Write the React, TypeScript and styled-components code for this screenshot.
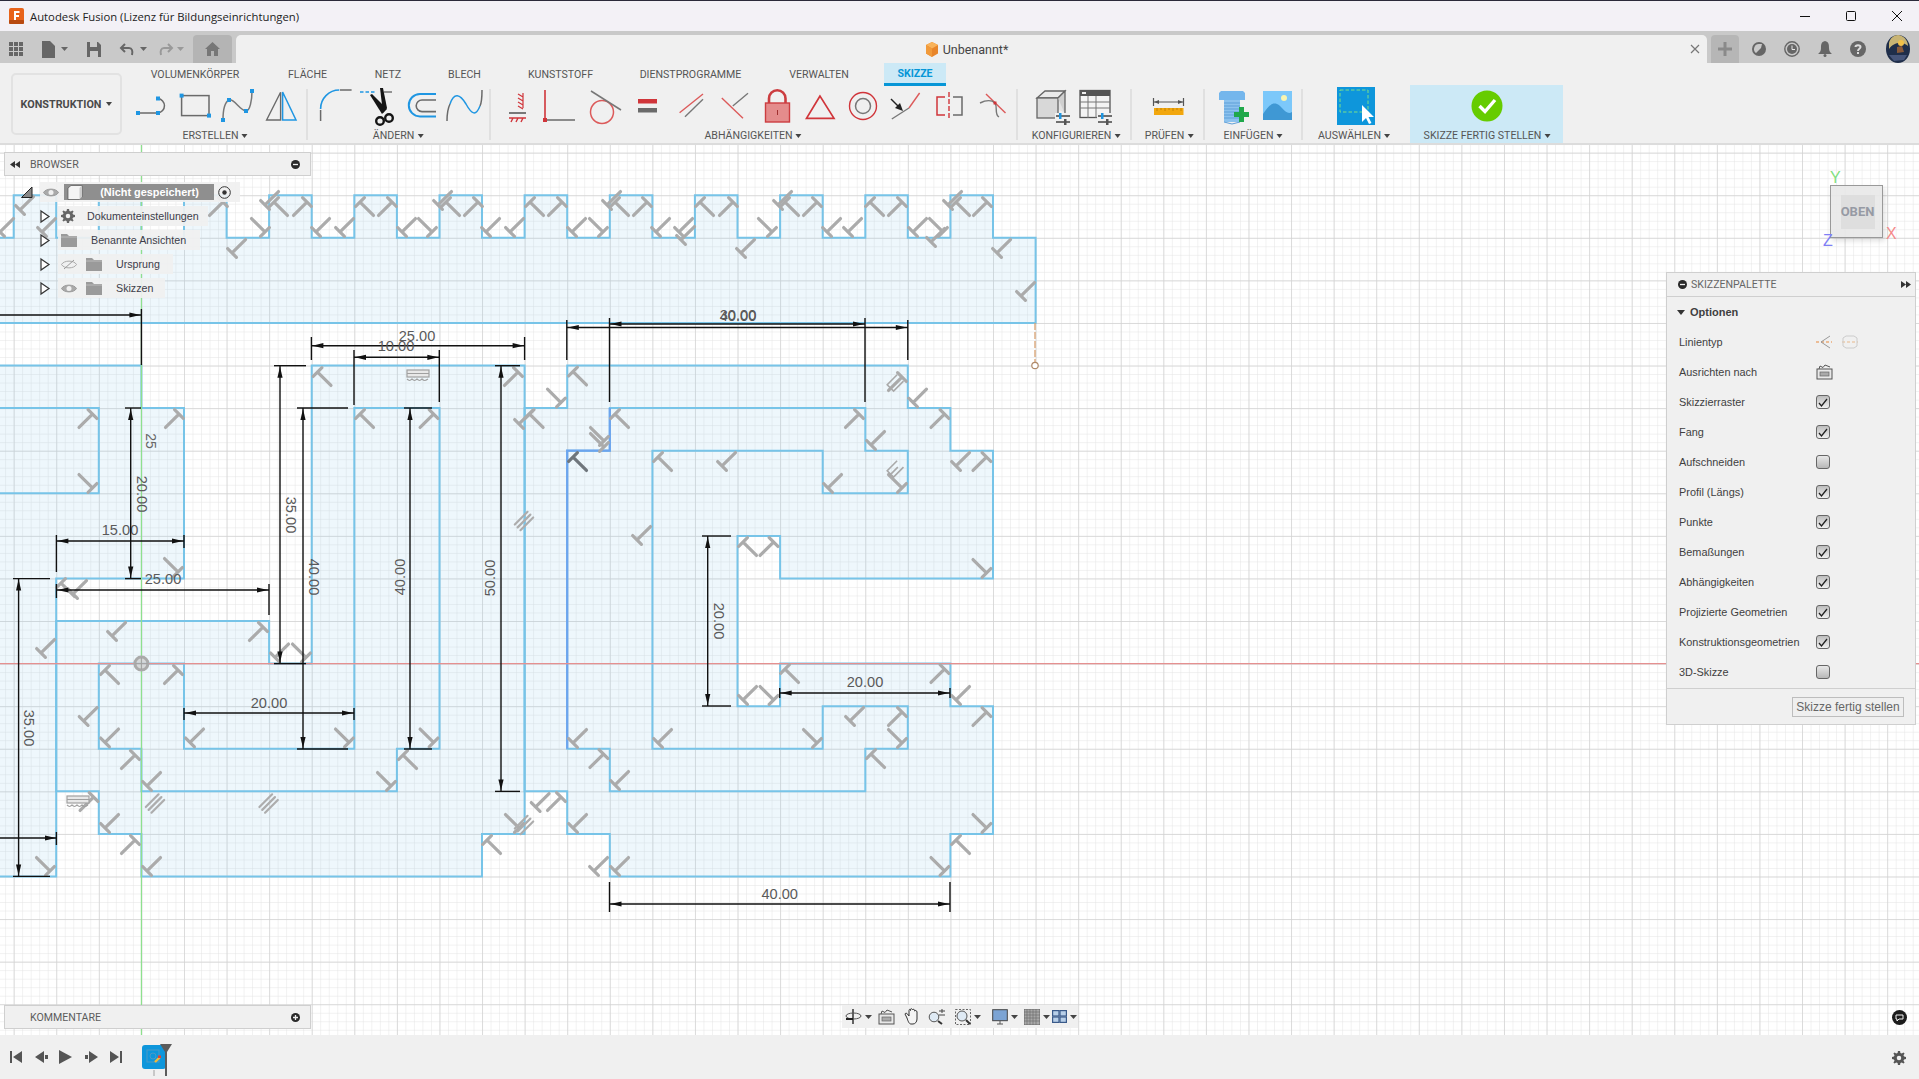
import React from 'react';
import styled, { createGlobalStyle } from 'styled-components';

const Global = createGlobalStyle`
  html, body { margin: 0; padding: 0; width: 1919px; height: 1079px; overflow: hidden; background: #fff; }
  * { box-sizing: border-box; }
  svg { display: block; overflow: visible; }
`;

const SANS = `"Liberation Sans", Arial, sans-serif`;
const RIB = `Roboto, "Liberation Sans", sans-serif`;
const BLUE = '#1f96e2';
const RED = '#d0353a';
const GRAY = '#6a6a6a';

/* ---------- window chrome ---------- */
const Page = styled.div`
  width: 1919px; height: 1079px; display: flex; flex-direction: column;
  font-family: ${SANS}; color: #444; overflow: hidden;
`;
const TitleBar = styled.div`
  height: 31px; flex: none; background: #f3f1f6; border-top: 1px solid #2b2a3a;
  display: flex; align-items: center; padding-left: 9px;
`;
const TitleText = styled.span`
  font-family: "Open Sans", sans-serif; font-size: 11.3px; color: #222; margin-left: 6px; flex: 1; white-space: nowrap;
`;
const WinBtn = styled.div`
  width: 46px; height: 30px; display: flex; align-items: center; justify-content: center; position: relative; left: 1px;
`;
const TabBar = styled.div`
  height: 32px; flex: none; background: #c9c9c9; display: flex; align-items: flex-end;
`;
const QuickBar = styled.div`
  width: 193px; height: 28px; display: flex; align-items: center; padding-left: 9px; flex: none;
`;
const QuickItem = styled.div<{ $w: number }>`
  width: ${p => p.$w}px; display: flex; align-items: center; flex: none;
`;
const QuickGap = styled.span<{ $w: number }>`
  width: ${p => p.$w}px; flex: none;
`;
const HomeTab = styled.div`
  width: 39px; height: 28px; background: #b4b4b4; border-radius: 4px 4px 0 0; display: flex;
  align-items: center; justify-content: center; margin-right: 4px; flex: none;
`;
const DocTab = styled.div`
  width: 1471px; height: 28px; background: #f0f0f0; border-radius: 5px 5px 0 0; flex: none; padding-right: 10px;
  display: flex; align-items: center; justify-content: center; position: relative;
`;
const DocTitle = styled.span`
  font-family: ${RIB}; font-size: 12.5px; color: #444; margin-left: 4px;
`;
const DocClose = styled.div`
  position: absolute; right: 5px; top: 9px; width: 12px; height: 12px;
`;
const PlusTab = styled.div`
  width: 28px; height: 28px; background: #b6b6b6; border-radius: 4px 4px 0 0; margin-left: 4px;
  display: flex; align-items: center; justify-content: center; flex: none;
`;
const TabIcons = styled.div`
  display: flex; align-items: center; height: 28px; padding-left: 3px; flex: none;
`;
const TabIcon = styled.div<{ $w?: number }>`
  width: ${p => p.$w ?? 33}px; display: flex; justify-content: center;
`;

/* ---------- ribbon ---------- */
const Ribbon = styled.div`
  height: 82px; flex: none; background: #f0f0f0; border-bottom: 2px solid #dcdcdc;
  display: flex; padding-left: 11px;
`;
const ModeBox = styled.div`
  width: 111px; height: 62px; margin-top: 10px; border: 2px solid #e2e2e2; border-radius: 5px;
  display: flex; align-items: center; justify-content: center; gap: 5px; flex: none;
  font-family: ${RIB}; font-weight: 700; font-size: 10.8px; color: #4a4a4a;
`;
const Caret = styled.span`
  display: inline-block; width: 0; height: 0; flex: none;
  border-left: 3px solid transparent; border-right: 3px solid transparent; border-top: 4px solid #444;
`;
const ToolArea = styled.div`
  display: flex; flex-direction: column; flex: none; margin-left: 8px;
`;
const RibbonTabs = styled.div`
  height: 23px; display: flex; margin-left: -4px;
`;
const RibbonTab = styled.div<{ $w: number; $active?: boolean; $ml?: number }>`
  width: ${p => p.$w}px; height: 23px; margin-left: ${p => p.$ml ?? 0}px; display: flex; align-items: center; justify-content: center;
  font-family: ${RIB}; font-size: 10.6px; color: ${p => (p.$active ? '#0696d7' : '#555')};
  font-weight: ${p => (p.$active ? 700 : 400)}; white-space: nowrap;
  ${p => p.$active && 'background: #cce9f6; border-bottom: 3px solid #0696d7; padding-top: 1px;'}
`;
const Groups = styled.div`
  display: flex; height: 57px;
`;
const Group = styled.div<{ $w: number; $sep?: boolean; $hl?: boolean; $pl?: number }>`
  width: ${p => p.$w}px; flex: none; display: flex; flex-direction: column; align-items: flex-start;
  padding-left: ${p => p.$pl ?? 0}px; position: relative;
  ${p => p.$hl && 'background: #cce9f6; margin-top: -1px; height: 58px; padding-top: 1px;'}
  ${p => p.$sep && `&::after { content: ''; position: absolute; right: 0; top: 3px; bottom: 3px; width: 2px; background: #e0e0e0; }`}
`;
const Tools = styled.div`
  display: flex; height: 40px; margin-top: 2px;
`;
const Tool = styled.div<{ $w?: number }>`
  width: ${p => p.$w ?? 43.2}px; height: 40px; display: flex; justify-content: center; flex: none;
`;
const GroupLabel = styled.div<{ $cx: number; $top?: number }>`
  position: absolute; top: ${p => p.$top ?? 43}px; left: ${p => p.$cx}px; transform: translateX(-50%);
  display: flex; align-items: center; gap: 3px; white-space: nowrap;
  font-family: ${RIB}; font-size: 10.6px; color: #555;
`;

/* ---------- canvas ---------- */
const Canvas = styled.div`
  flex: 1; position: relative; background: #fff; overflow: hidden;
`;
const Sheet = styled.svg`
  position: absolute; left: 0; top: 0;
`;
const BrowserPanel = styled.div`
  position: absolute; left: 4px; top: 7px; width: 307px;
`;
const PanelHead = styled.div`
  height: 24px; background: #f0f0f0; border: 1px solid #cfcfcf; display: flex; align-items: center;
  padding: 0 10px 0 5px; font-family: ${RIB}; font-size: 10.6px; color: #5c5c5c; gap: 8px;
`;
const HeadTitle = styled.span<{ $ml?: number }>`
  flex: 1; margin-left: ${p => p.$ml ?? 0}px;
`;
const Tree = styled.div`
  display: flex; flex-direction: column; gap: 4px; margin-top: 6px;
`;
const TreeRow = styled.div<{ $pl: number }>`
  display: flex; height: 20px; align-items: center; padding-left: ${p => p.$pl}px;
`;
const Expander = styled.div<{ $w: number }>`
  width: ${p => p.$w}px; flex: none;
`;
const RowBox = styled.div<{ $w: number }>`
  width: ${p => p.$w}px; height: 20px; background: rgba(240,240,240,.92); display: flex; align-items: center; padding-left: 3px;
  font-size: 10.7px; color: #3d3d4a; white-space: nowrap;
`;
const RowLabel = styled.span<{ $ml: number }>`
  margin-left: ${p => p.$ml}px;
`;
const RootBar = styled.div`
  width: 150px; height: 16px; margin-left: 5px; background: #8f8f8f; display: flex; align-items: center;
  color: #fff; font-weight: 700; font-size: 10.9px; padding-left: 3px; margin-right: 4px;
`;
const RootText = styled.span`
  flex: 1; text-align: center; padding-left: 2px;
`;
const CommentBar = styled(PanelHead)`
  position: absolute; left: 4px; top: 860px; width: 307px; height: 24px;
`;
const NavBar = styled.div`
  position: absolute; left: 842px; top: 860px; width: 236px; height: 23px; background: #f0f0f0;
  display: flex; align-items: center;
`;
const NavItem = styled.div<{ $w: number }>`
  width: ${p => p.$w}px; flex: none; display: flex; align-items: center; justify-content: center; gap: 3px;
`;
const Corner = styled.div`
  position: absolute; left: 1892px; top: 865px; width: 15px; height: 15px; border-radius: 50%; background: #1c1c1c;
  display: flex; align-items: center; justify-content: center;
`;
const Cube = styled.div`
  position: absolute; left: 1830px; top: 40px; width: 53px; height: 53px; background: rgba(232,232,232,.9);
  border: 1.5px solid #999; box-shadow: 2px 3px 5px rgba(0,0,0,.12); display: flex; align-items: center; justify-content: center;
`;
const CubeText = styled.span`
  font-family: ${RIB}; font-weight: 700; font-size: 13px; color: #969aa4; background: #dedede;
  padding: 10px 0; width: 34px; text-align: center; line-height: 14px; transform: translateX(1px);
`;
const Axis = styled.span<{ $c: string; $x: number; $y: number }>`
  position: absolute; left: ${p => p.$x}px; top: ${p => p.$y}px; color: ${p => p.$c};
  font-size: 16px; line-height: 14px; font-weight: 400;
`;
const Palette = styled.div`
  position: absolute; left: 1666px; top: 127px; width: 250px; background: #f0f0f0; border: 1px solid #cfcfcf;
  display: flex; flex-direction: column; font-size: 10.9px; color: #3f3f3f;
`;
const PalHead = styled.div`
  height: 24px; display: flex; align-items: center; padding: 0 4px 0 11px; gap: 4px; border-bottom: 1px solid #cfcfcf;
  font-family: ${RIB}; font-size: 10.6px; color: #666;
`;
const PalSection = styled.div`
  height: 30px; display: flex; align-items: center; padding-left: 10px; gap: 5px; font-weight: 700; font-size: 11px; color: #3f3f3f;
`;
const SecCaret = styled.span`
  width: 0; height: 0; border-left: 4px solid transparent; border-right: 4px solid transparent; border-top: 5px solid #333;
`;
const PalRow = styled.div`
  height: 30px; display: grid; grid-template-columns: 137px 1fr; align-items: center; padding-left: 12px;
`;
const PalCtrl = styled.div`
  display: flex; align-items: center; gap: 10px;
`;
const Check = styled.div<{ $on: boolean }>`
  width: 14px; height: 14px; border: 1px solid #666; border-radius: 3px; background: ${p => (p.$on ? 'linear-gradient(#bdbdbd,#f0f0f0)' : 'linear-gradient(#e8e8e8,#b8b8b8)')};
  display: flex; align-items: center; justify-content: center; flex: none;
`;
const PalFoot = styled.div`
  height: 36px; margin-top: 1px; border-top: 1px solid #cfcfcf; display: flex; justify-content: flex-end; align-items: center; padding-right: 11px;
`;
const PalBtn = styled.div`
  width: 112px; height: 20px; border: 1px solid #bdbdbd; color: #666; font-size: 12px; display: flex; align-items: center; justify-content: center; background: #efefef; white-space: nowrap;
`;

/* ---------- timeline ---------- */
const Timeline = styled.div`
  height: 44px; flex: none; background: #f0f0f0; display: flex; align-items: center; padding-left: 10px; position: relative;
`;
const PlayBtn = styled.div<{ $w: number }>`
  width: ${p => p.$w}px; flex: none;
`;
const TimeItem = styled.div`
  width: 24px; height: 24px; margin-left: 26px; background: #0e96db; border-radius: 3px; flex: none; display: flex; align-items: center; justify-content: center;
`;
const Marker = styled.svg`
  position: absolute; left: 160px; top: 9px;
`;
const TimeStub = styled.div`
  position: absolute; left: 153px; top: 35px; width: 2px; height: 6px; background: #c8c8c8;
`;
const SettingGear = styled.div`
  position: absolute; right: 13px; top: 16px;
`;

/* ---------- sketch data ---------- */
const U = 42.58, OX = 141.4, OY = 663.6;
const X = (k: number) => OX + U * k;
const Y = (k: number) => OY - U * k;
const poly = (pts: number[][]) => pts.map(([a, b]) => `${X(a).toFixed(1)},${Y(b).toFixed(1)}`).join(' ');

const topShape = (() => {
  const pts: number[][] = [[-5, 8], [-5, 10]];
  for (let k = -3; k <= 19; k += 2) pts.push([k, 10], [k, 11], [k + 1, 11], [k + 1, 10]);
  pts.push([21, 10], [21, 8]);
  return pts;
})();
const leftShape = [[-5, 7], [0, 7], [0, 6], [1, 6], [1, 2], [-2, 2], [-2, -5], [-5, -5]];
const leftNotch = [[-5, 6], [-1, 6], [-1, 4], [-5, 4]];
const midOuter = [[-2, 1], [3, 1], [3, 0], [4, 0], [4, 7], [9, 7], [9, -4], [8, -4], [8, -5], [0, -5], [0, -4], [-1, -4], [-1, -3], [-2, -3]];
const midInner = [[-1, 0], [1, 0], [1, -2], [5, -2], [5, 6], [7, 6], [7, -2], [6, -2], [6, -3], [0, -3], [0, -2], [-1, -2]];
const rightOuter = [[9, 6], [10, 6], [10, 7], [18, 7], [18, 6], [19, 6], [19, 5], [20, 5], [20, 2], [15, 2], [15, 3], [14, 3], [14, -1], [15, -1], [15, 0], [19, 0], [19, -1], [20, -1], [20, -4], [19, -4], [19, -5], [11, -5], [11, -4], [10, -4], [10, -3], [9, -3]];
const rightInner = [[10, 5], [11, 5], [11, 6], [17, 6], [17, 5], [18, 5], [18, 4], [16, 4], [16, 5], [12, 5], [12, -2], [16, -2], [16, -1], [18, -1], [18, -2], [17, -2], [17, -3], [11, -3], [11, -2], [10, -2]];

const TL = -45, TR = 45, BR = 135, BL = -135;
const glyphs: number[][] = [
  [25, 205, BL], [5, 227, BL], [47, 227, BL], [218, 207, TR], [260, 227, BR], [237, 248, BL], [270, 200, BL],
  [279, 207, TL], [302, 207, TR], [321, 227, BL], [345, 227, BL], [365, 207, TL], [387, 207, TR], [407, 227, BL], [427, 227, BR],
  [443, 200, BL], [451, 207, TL], [473, 207, TR], [491, 227, BL], [515, 227, BL], [535, 207, TL], [557, 207, TR], [577, 227, BL], [598, 227, BR],
  [612, 200, BL], [620, 207, TL], [642, 207, TR], [661, 227, BL], [684, 227, BL], [686, 235, BL], [705, 207, TL], [728, 207, TR], [767, 227, BR], [746, 248, BL],
  [783, 200, BL], [790, 207, TL], [812, 207, TR], [832, 227, BL], [853, 227, BL], [875, 207, TL], [897, 207, TR], [918, 227, BL], [938, 227, BR], [936, 237, BL],
  [953, 200, BL], [961, 207, TL], [982, 207, TR], [1002, 248, BL], [1026, 291, BL],
  [87.5, 419, TR], [87.5, 483, BR], [174, 419, TR], [173, 567, BR], [66, 588, TL], [78, 589, BL], [117, 631, BL], [258, 632, TR], [46, 648, BL],
  [110, 675, TL], [173, 675, TR], [88.6, 716, BL], [110, 737.5, BL], [195, 737.5, BL], [344, 737.5, BR], [130, 760, TR], [152, 781, BL], [386, 781, BR],
  [408, 760, TL], [428.6, 737.5, BR], [365, 419, TL], [428.6, 419, TR], [322.5, 377, TL], [513, 377, TR], [534.6, 419, TL], [524, 419, BL],
  [280, 652.5, BL], [301, 652.5, BR], [110, 823, BL], [130, 845, TR], [152, 866, BL], [492, 845, TL], [514, 823, BR], [45, 866, BR], [88.6, 802, TR],
  [556, 397.6, BR], [578, 376.5, TL], [897, 382, TR], [918, 397.6, BL], [599, 436, BR], [599, 442, BR], [620, 419, TL], [854, 419, TR], [876, 440, BL], [939.5, 419, TR],
  [663, 462, TL], [727, 461, BL], [833, 483, BL], [897, 483, BR], [961, 461, BL], [981.5, 462, TR], [981.5, 568, BR], [642, 535, BL], [748, 547, TL], [768.6, 547, TR],
  [748, 695, BL], [768.6, 695, BR], [790, 674, TL], [939.5, 674, TR], [961, 695, BL], [981.5, 717, TR], [855, 716, BL], [897, 717, TR], [897, 738, BR], [812, 738, BR], [663, 738, BL], [578, 738, BL],
  [598.5, 759, TR], [620, 780, BL], [876, 759, TL], [981.5, 823, BR], [961, 845, TL], [939.5, 866, BR], [620, 866, BL], [599, 866, BL], [578, 823, BL], [540.6, 802, BL], [556, 802, TR],
];
const parallels = [[524, 521], [155, 803.5], [268.6, 803.5], [524, 825]];
const brackets = [[895, 384], [895, 470]];

const hdims = [
  { a: 311.4, b: 524.6, y: 345.7, t: '25.00', tx: 417, ty: 341, e1: [337, 360], e2: [337, 360] },
  { a: 354, b: 439.3, y: 357.3, t: '10.00', tx: 396, ty: 351, e1: [350, 405], e2: [350, 402] },
  { a: 56.4, b: 184, y: 541, t: '15.00', tx: 120, ty: 535, e1: [535, 572], e2: [535, 548] },
  { a: 56.4, b: 269, y: 590, t: '25.00', tx: 163, ty: 584, e1: [584, 598], e2: [584, 615] },
  { a: 184, b: 354, y: 713, t: '20.00', tx: 269, ty: 708, e1: [708, 720], e2: [708, 720] },
  { a: 566.8, b: 907.8, y: 327.5, t: '30.00', tx: 738, ty: 320, e1: [320, 360], e2: [320, 360] },
  { a: 609.5, b: 865, y: 324, t: '40.00', tx: 738, ty: 321, e1: [318, 402], e2: [318, 402] },
  { a: 779.7, b: 950, y: 693, t: '20.00', tx: 865, ty: 687, e1: [688, 698], e2: [688, 698] },
  { a: 609.5, b: 950, y: 904, t: '40.00', tx: 779.7, ty: 899, e1: [882, 912], e2: [882, 912] },
];
const vdims = [
  { a: 365.7, b: 663.6, x: 280, t: '35.00', tx: 286, ty: 515, rot: 90, e: [274, 306] },
  { a: 408, b: 749, x: 303, t: '40.00', tx: 309, ty: 577, rot: 90, e: [297, 348] },
  { a: 408, b: 749, x: 410, t: '40.00', tx: 405, ty: 577, rot: -90, e: [404, 432] },
  { a: 365.7, b: 791.4, x: 501, t: '50.00', tx: 495, ty: 578, rot: -90, e: [495, 520] },
  { a: 408, b: 578.6, x: 130.7, t: '20.00', tx: 137, ty: 494, rot: 90, e: [125, 141] },
  { a: 578.6, b: 876.4, x: 18.6, t: '35.00', tx: 24, ty: 728, rot: 90, e: [13, 50] },
  { a: 536, b: 706, x: 707.7, t: '20.00', tx: 714, ty: 621, rot: 90, e: [702, 731] },
];

const Arrow = ({ x, y, dir }: { x: number; y: number; dir: 'l' | 'r' | 'u' | 'd' }) => {
  const l = 11, w = 2.6;
  const p = dir === 'l' ? `${x},${y} ${x + l},${y - w} ${x + l},${y + w}`
    : dir === 'r' ? `${x},${y} ${x - l},${y - w} ${x - l},${y + w}`
      : dir === 'u' ? `${x},${y} ${x - w},${y + l} ${x + w},${y + l}`
        : `${x},${y} ${x - w},${y - l} ${x + w},${y - l}`;
  return <polygon points={p} fill="#111" />;
};

const DIM_TEXT = { fontFamily: 'Liberation Sans, Arial, sans-serif', fontSize: 14.6, fill: '#5a5a5a' };
const T_PATH = 'M0 -7V12M-6.2 -7H6.2';

const Sketch = () => (
  <Sheet width={1919} height={890} viewBox="0 145 1919 890">
    <defs>
      <pattern id="minor" patternUnits="userSpaceOnUse" x={OX} y={OY} width={U / 5} height={U / 5}>
        <path d={`M0 0V${U / 5}M0 0H${U / 5}`} stroke="#e4e4e4" strokeWidth="1" fill="none" />
      </pattern>
      <pattern id="major" patternUnits="userSpaceOnUse" x={OX} y={OY} width={U} height={U}>
        <path d={`M0 0V${U}M0 0H${U}`} stroke="#d2d2d2" strokeWidth="1.4" fill="none" />
      </pattern>
    </defs>
    <rect x="0" y="145" width="1919" height="890" fill="url(#minor)" />
    <rect x="0" y="145" width="1919" height="890" fill="url(#major)" />

    {[topShape, leftShape, midOuter, rightOuter].map((s, i) => (
      <polygon key={i} points={poly(s)} fill="#8ccbee" fillOpacity=".15" stroke="#77c4e8" strokeWidth="2" />
    ))}
    <polyline points={poly(leftNotch)} fill="none" stroke="#77c4e8" strokeWidth="2" />
    <polygon points={poly(midInner)} fill="none" stroke="#77c4e8" strokeWidth="2" />
    <polygon points={poly(rightInner)} fill="none" stroke="#77c4e8" strokeWidth="2" />
    <polyline points={poly([[10, -2], [10, 5], [11, 5], [11, 6]])} fill="none" stroke="#6ca4ee" strokeWidth="2.2" />

    <line x1="0" x2="1919" y1={OY} y2={OY} stroke="#e59090" strokeWidth="1.2" />
    <line x1={OX} x2={OX} y1="145" y2="1035" stroke="#8ee08e" strokeWidth="1.2" />
    <circle cx={OX} cy={OY} r="6.5" fill="#d0d0d0" fillOpacity=".8" stroke="#aaaaaa" strokeWidth="3" />
    <path d={`M${OX} ${OY - 6}V${OY + 6}M${OX - 6} ${OY}H${OX + 6}`} stroke="#a0a0a0" />

    <line x1="1035" x2="1035" y1="323" y2="362" stroke="#d8a070" strokeDasharray="7 2" strokeWidth="1.3" />
    <circle cx="1035" cy="365.5" r="3.2" fill="#fff" stroke="#b08a6a" strokeWidth="1.2" />

    {glyphs.map(([x, y, r], i) => (
      <g key={i} transform={`translate(${x} ${y}) rotate(${r})`} stroke="#ababab" strokeWidth="3.2" strokeLinecap="round">
        <path d={T_PATH} fill="none" />
      </g>
    ))}
    <g transform="translate(578 462) rotate(-45)" stroke="#6f767c" strokeWidth="3.2" strokeLinecap="round">
      <path d={T_PATH} fill="none" />
    </g>
    {parallels.map(([x, y], i) => (
      <g key={i} transform={`translate(${x} ${y}) rotate(-45)`} stroke="#adadad" strokeWidth="2.2" strokeLinecap="round">
        <path d="M-9 -4H9M-9 0H9M-9 4H9" fill="none" />
      </g>
    ))}
    {brackets.map(([x, y], i) => (
      <g key={i} transform={`translate(${x} ${y}) rotate(-45)`} stroke="#a9a9a9" strokeWidth="1.6" fill="none">
        <path d="M8 -5H-6V4H8M4 0H-9" />
      </g>
    ))}
    {[[418, 375], [78, 801]].map(([x, y], i) => (
      <g key={i} transform={`translate(${x} ${y})`} fill="none" stroke="#a0a0a0" strokeWidth="1.2">
        <rect x="-11" y="-5" width="22" height="7" fill="#e8e8e8" />
        <path d="M-11 -1.5H11M-11 4C-9 6 -8 6 -6 4C-4 6 -3 6 -1 4C1 6 2 6 4 4C6 6 7 6 10 4" />
      </g>
    ))}

    <g stroke="#111" strokeWidth="1.4">
      <line x1="0" x2={OX} y1="315" y2="315" />
      <line x1={OX} x2={OX} y1="309" y2="365" />
      <line x1="0" x2="56" y1="838" y2="838" />
      <line x1="56.4" x2="56.4" y1="832" y2="845" />
    </g>
    <Arrow x={OX - 1} y={315} dir="r" />
    <Arrow x={56} y={838} dir="r" />

    {hdims.map((d, i) => (
      <g key={i}>
        <g stroke="#111" strokeWidth="1.4">
          <line x1={d.a} x2={d.b} y1={d.y} y2={d.y} />
          <line x1={d.a} x2={d.a} y1={d.e1[0]} y2={d.e1[1]} />
          <line x1={d.b} x2={d.b} y1={d.e2[0]} y2={d.e2[1]} />
        </g>
        <Arrow x={d.a + 1} y={d.y} dir="l" />
        <Arrow x={d.b - 1} y={d.y} dir="r" />
        <text x={d.tx} y={d.ty} textAnchor="middle" {...DIM_TEXT}>{d.t}</text>
      </g>
    ))}
    {vdims.map((d, i) => (
      <g key={i}>
        <g stroke="#111" strokeWidth="1.4">
          <line x1={d.x} x2={d.x} y1={d.a} y2={d.b} />
          <line x1={d.e[0]} x2={d.e[1]} y1={d.a} y2={d.a} />
          <line x1={d.e[0]} x2={d.e[1]} y1={d.b} y2={d.b} />
        </g>
        <Arrow x={d.x} y={d.a + 1} dir="u" />
        <Arrow x={d.x} y={d.b - 1} dir="d" />
        <text transform={`translate(${d.tx} ${d.ty}) rotate(${d.rot})`} textAnchor="middle" {...DIM_TEXT}>{d.t}</text>
      </g>
    ))}
    <text transform="translate(146 441) rotate(90)" textAnchor="middle" fontFamily="Liberation Sans, Arial, sans-serif" fontSize="14" fill="#666">25</text>
  </Sheet>
);

/* ---------- small icons ---------- */
const Sq = ({ x, y, s = 4 }: { x: number; y: number; s?: number }) => <rect x={x - s / 2} y={y - s / 2} width={s} height={s} fill={BLUE} />;
const I = ({ children, w = 44, h = 40 }: { children: React.ReactNode; w?: number; h?: number }) => (
  <svg width={w} height={h} viewBox={`0 0 ${w} ${h}`} fill="none">{children}</svg>
);
const Sliders = ({ x, y }: { x: number; y: number }) => (
  <g>
    <rect x={x - 1} y={y - 3} width="16" height="11" fill="#f0f0f0" />
    <path d={`M${x} ${y}H${x + 14}M${x} ${y + 6}H${x + 14}`} stroke="#444" strokeWidth="1.7" />
    <rect x={x + 3} y={y - 3} width="2.5" height="6" fill={BLUE} />
    <rect x={x + 8} y={y + 3} width="2.5" height="6" fill="#555" />
  </g>
);

const Icons = {
  line: <I><path d="M8 25H28M28 10.5A7.3 7.3 0 0 1 28 25" stroke={GRAY} strokeWidth="1.5" /><Sq x={8} y={25} /><Sq x={28} y={25} /><Sq x={28} y={10.5} /></I>,
  rect: <I><rect x="8.6" y="7.6" width="27.4" height="20" stroke={GRAY} strokeWidth="1.5" /><Sq x={8.6} y={7.6} /><Sq x={36} y={27.6} /></I>,
  spline: <I><path d="M7 32C7 22 9 14 13 12C18 10 24 23 30 23C34 23 36 12 36 3" stroke="#777" strokeWidth="1.5" /><Sq x={7} y={32} /><Sq x={13} y={12} /><Sq x={30} y={23} /><Sq x={36} y={3} /></I>,
  mirror: <I><path d="M7.6 32L21.6 4.3V32Z" stroke={GRAY} strokeWidth="1.4" /><path d="M23.6 4L37 32H23.6Z" stroke={BLUE} strokeWidth="1.5" /></I>,
  fillet: <I><path d="M7.6 33V22M27 2H38.6" stroke={GRAY} strokeWidth="1.5" /><path d="M7.6 21A18.7 18.7 0 0 1 26.3 2" stroke={BLUE} strokeWidth="1.6" /></I>,
  scissors: <I><path d="M4 4H19" stroke={BLUE} strokeWidth="1.4" strokeDasharray="3.5 2" /><path d="M28 4H36" stroke={GRAY} strokeWidth="1.4" /><path d="M24 0L27 0L31 20L27 25Z" fill="#151515" /><path d="M14 7L16 6L31 21L26 26Z" fill="#151515" /><circle cx="24" cy="33" r="3.8" stroke="#151515" strokeWidth="2.4" /><circle cx="33" cy="30" r="3.8" stroke="#151515" strokeWidth="2.4" /></I>,
  offset: <I><path d="M37 6H21A11.2 11.2 0 0 0 21 28.4H37" stroke={BLUE} strokeWidth="2" /><path d="M37 12H23A5.8 5.8 0 0 0 23 23.6H37" stroke={GRAY} strokeWidth="1.6" /></I>,
  sline: <I><path d="M5 33C5 25 6 20 8 16M38 18C40 14 40 8 40 2" stroke={GRAY} strokeWidth="1.5" /><path d="M8 16C12 4 18 6 24 16C30 27 34 28 38 18" stroke={BLUE} strokeWidth="1.5" /></I>,
  coincide: <I><path d="M27 5V20M22 6L27 9M22 10L27 13M22 14L27 17M22 18L27 21" stroke={RED} strokeWidth="1.2" /><path d="M13 25H30" stroke={GRAY} strokeWidth="1.8" /><path d="M13 30H30M15 34L17 30M20 34L22 30M25 34L27 30" stroke={RED} strokeWidth="1.4" /></I>,
  perp: <I><path d="M6 2V32" stroke={RED} strokeWidth="1.6" /><path d="M6 32H36" stroke={GRAY} strokeWidth="1.5" /><rect x="4" y="30" width="4" height="4" fill={RED} /></I>,
  tangent: <I><circle cx="20" cy="24" r="11.5" stroke="#dc5a5a" strokeWidth="1.5" /><path d="M9 3L39 22" stroke="#777" strokeWidth="1.5" /></I>,
  equal: <I><rect x="13" y="11" width="19" height="4.5" fill={RED} /><rect x="13" y="20" width="19" height="4.5" fill={GRAY} /></I>,
  parallel: <I><path d="M10.6 24.7L34 6" stroke="#dc5a5a" strokeWidth="1.4" /><path d="M16 28.7L34 11.3" stroke="#777" strokeWidth="1.4" /></I>,
  perp2: <I><path d="M9.8 10L31 30.3" stroke="#dc5a5a" strokeWidth="1.4" /><path d="M20.8 18L36 5.3" stroke="#777" strokeWidth="1.4" /></I>,
  lock: <I><path d="M14 15V10.5A8 8 0 0 1 30.5 10.5V15" stroke="#cc3d40" strokeWidth="2.6" /><rect x="10.5" y="15" width="24" height="19" fill="#e48c8c" stroke="#cc3d40" strokeWidth="1.4" /><path d="M22.5 22V27" stroke="#a03030" /></I>,
  triangle: <I><path d="M22 8L8.5 30.3H36Z" stroke={RED} strokeWidth="1.7" /></I>,
  concentric: <I><circle cx="22" cy="18" r="13.5" stroke={RED} strokeWidth="1.4" /><circle cx="22" cy="18" r="7.5" stroke="#777" strokeWidth="1.5" /></I>,
  midpoint: <I><path d="M35.6 5L25 20" stroke="#dc5a5a" strokeWidth="1.4" /><path d="M25 20L7.8 31" stroke="#777" strokeWidth="1.4" /><path d="M7 11L15 19" stroke="#222" strokeWidth="1.5" /><path d="M19 23L11 20L16 15Z" fill="#222" /></I>,
  symmetry: <I><path d="M18 9H10V27H18" stroke={RED} strokeWidth="1.5" /><path d="M26 9H35V27H26" stroke={GRAY} strokeWidth="1.5" /><path d="M22 4V32" stroke={RED} strokeWidth="1.4" strokeDasharray="5 2" /></I>,
  curvature: <I><path d="M16 6L35.5 25" stroke="#dc5a5a" strokeWidth="1.4" /><path d="M10 15C16 12 22 12 25 15C28 19 24 26 29 29" stroke="#777" strokeWidth="1.4" /><rect x="23.5" y="13.5" width="3" height="3" fill={RED} /></I>,
  paramCube: <I><path d="M7 10L15 3H35V25" fill="#e2e2e2" /><path d="M7 10L15 3H35L28 10Z" fill="#eaeaea" stroke="#666" strokeWidth="1.3" /><rect x="7" y="10" width="21" height="20" fill="#d8d8d8" stroke="#666" strokeWidth="1.3" /><path d="M28 10L35 3V26" fill="#cfcfcf" stroke="#666" strokeWidth="1.3" /><Sliders x={26} y={28} /></I>,
  paramTable: <I><rect x="6" y="2.5" width="30" height="27" fill="#f4f4f4" stroke="#555" strokeWidth="1.3" /><rect x="6" y="2" width="30" height="6" fill="#555" /><rect x="8" y="4" width="4" height="2" fill="#eee" /><path d="M6 14H36M6 20H36M14 8V30M22 8V30" stroke="#777" /><Sliders x={24} y={28} /></I>,
  measure: <I><path d="M8 14H37" stroke="#555" strokeWidth="1" /><path d="M7.5 10V18M37.5 10V18" stroke="#555" strokeWidth="1.2" /><path d="M8 14L13 12V16ZM37 14L32 12V16Z" fill="#555" /><rect x="8" y="20" width="29.5" height="7" fill="#f2a70e" /><path d="M11 20V23M15 20V22M19 20V23M23 20V22M27 20V23M31 20V22M35 20V23" stroke="#b97a00" strokeWidth=".8" /></I>,
  bolt: <I><path d="M7 3H29L31 5V12H5V5Z" fill="#74b6ec" /><rect x="10" y="12" width="16" height="22" fill="#8cc2ee" /><path d="M10 15H26M10 18H26M10 21H26M10 24H26M10 27H26M10 30H26" stroke="#5f9fd8" strokeWidth="1" /><path d="M10 34L18 36L26 34" stroke="#5f9fd8" /><rect x="20" y="24" width="15" height="5" fill="#20a84a" /><rect x="25" y="19" width="5" height="15" fill="#20a84a" /></I>,
  image: <I><rect x="6" y="3" width="29" height="29" fill="#7cc8fa" /><circle cx="27" cy="10" r="3" fill="#f8f4b0" /><path d="M6 32V26C10 20 14 14 20 16C25 18 29 28 35 24V32Z" fill="#3f98d4" /></I>,
  select: <I h={40}><rect x="3" y="-1" width="38" height="38" fill="#0e96db" /><rect x="6" y="2" width="28" height="22" stroke="#7adf8a" strokeDasharray="3.5 2" strokeWidth="1" /><path d="M28 17V34L32 30L35 36L37.5 35L34.5 29L40 29Z" fill="#fff" /></I>,
  finish: <I w={46} h={40}><circle cx="23" cy="18" r="15.5" fill="#66cc00" /><path d="M15.5 18L21 23.5L31 12" stroke="#fff" strokeWidth="3.4" /></I>,
};

const Tri = ({ c = '#222' }: { c?: string }) => <svg width="7" height="4"><path d="M0 0H7L3.5 4Z" fill={c} /></svg>;
const CubeIcon = () => (
  <svg width="14" height="17" viewBox="0 0 14 17"><path d="M7 1L13 4V12.5L7 16L1 12.5V4Z" fill="#e8852a" /><path d="M7 1L13 4L7 7.5L1 4Z" fill="#f9b35a" /><path d="M7 7.5V16L1 12.5V4Z" fill="#f19a3a" /></svg>
);
const Folder = () => (
  <svg width="16" height="13" viewBox="0 0 16 13"><path d="M0 0H6L8 2H16V13H0Z" fill="#9a9a9a" /><path d="M0 3H16" stroke="#bbb" /></svg>
);
const Eye = ({ off }: { off?: boolean }) => (
  <svg width="16" height="11" viewBox="0 0 16 11" fill="none">
    <path d="M0.5 5.5C3 1 13 1 15.5 5.5C13 10 3 10 0.5 5.5Z" fill={off ? 'none' : '#aaa'} stroke={off ? '#aaa' : '#999'} />
    {off ? <path d="M3 10L13 1" stroke="#999" /> : <circle cx="8" cy="5.5" r="2.5" fill="#f0f0f0" />}
  </svg>
);
const Gear = ({ s = 14, c = '#666' }: { s?: number; c?: string }) => (
  <svg width={s} height={s} viewBox="0 0 16 16">
    <path d="M6.8 0H9.2L9.6 2.2L11.2 2.9L13.1 1.6L14.4 2.9L13.1 4.8L13.8 6.4L16 6.8V9.2L13.8 9.6L13.1 11.2L14.4 13.1L13.1 14.4L11.2 13.1L9.6 13.8L9.2 16H6.8L6.4 13.8L4.8 13.1L2.9 14.4L1.6 13.1L2.9 11.2L2.2 9.6L0 9.2V6.8L2.2 6.4L2.9 4.8L1.6 2.9L2.9 1.6L4.8 2.9L6.4 2.2Z" fill={c} />
    <circle cx="8" cy="8" r="2.6" fill="#f0f0f0" />
  </svg>
);
const Exp = () => <svg width="10" height="13" viewBox="0 0 10 13" fill="none"><path d="M1 1L9 6.5L1 12Z" stroke="#333" strokeWidth="1.2" fill="#fff" /></svg>;
const DotBtn = ({ plus }: { plus?: boolean }) => (
  <svg width="9" height="9" viewBox="0 0 9 9"><circle cx="4.5" cy="4.5" r="4.5" fill="#2a2a2a" /><path d={plus ? 'M2 4.5H7M4.5 2V7' : 'M2 4.5H7'} stroke="#f0f0f0" strokeWidth="1.3" /></svg>
);
const DoubleTri = ({ left }: { left?: boolean }) => (
  <svg width="10" height="7" viewBox="0 0 10 7"><path d={left ? 'M5 0V7L0 3.5ZM10 0V7L5 3.5Z' : 'M0 0V7L5 3.5ZM5 0V7L10 3.5Z'} fill="#333" /></svg>
);

const palRows: [string, boolean][] = [
  ['Skizzierraster', true], ['Fang', true], ['Aufschneiden', false], ['Profil (Längs)', true], ['Punkte', true], ['Bemaßungen', true],
  ['Abhängigkeiten', true], ['Projizierte Geometrien', true], ['Konstruktionsgeometrien', true], ['3D-Skizze', false],
];

const ViewCapture = () => (
  <svg width="17" height="16" viewBox="0 0 17 16" fill="none"><rect x="1" y="5" width="15" height="10" stroke="#555" fill="#e8e8e8" /><rect x="4" y="8" width="9" height="4" fill="#aaa" stroke="#666" strokeWidth=".7" /><path d="M3 5L4 2L7 3.5L9 1L14 3" stroke="#555" /></svg>
);

const ribbonTabs: [string, number][] = [['VOLUMENKÖRPER', 138], ['FLÄCHE', 87], ['NETZ', 74], ['BLECH', 79], ['KUNSTSTOFF', 113], ['DIENSTPROGRAMME', 147], ['VERWALTEN', 110]];

export default function App() {
  return (
    <Page>
      <Global />
      <TitleBar>
        <svg width="15" height="16" viewBox="0 0 15 16"><rect width="15" height="16" rx="2" fill="#e8631a" /><rect y="12" width="15" height="4" rx="1" fill="#b84a10" /><path d="M5 3H10.5V5H7V7H10V9H7V12H5Z" fill="#fff" /></svg>
        <TitleText>Autodesk Fusion (Lizenz für Bildungseinrichtungen)</TitleText>
        <WinBtn><svg width="10" height="10"><path d="M0 5.5H10" stroke="#111" /></svg></WinBtn>
        <WinBtn><svg width="10" height="10"><rect x=".5" y=".5" width="9" height="9" rx="1" fill="none" stroke="#111" /></svg></WinBtn>
        <WinBtn><svg width="10" height="10"><path d="M0 0L10 10M10 0L0 10" stroke="#111" /></svg></WinBtn>
      </TitleBar>

      <TabBar>
        <QuickBar>
          <QuickItem $w={33}>
            <svg width="14" height="14" viewBox="0 0 14 14" fill="#666">{[0, 5, 10].flatMap(a => [0, 5, 10].map(b => <rect key={`${a}${b}`} x={a} y={b} width="4" height="4" />))}</svg>
          </QuickItem>
          <QuickItem $w={45}>
            <svg width="13" height="17" viewBox="0 0 13 17"><path d="M0 0H8L13 5V17H0Z" fill="#666" /></svg>
            <QuickGap $w={6} /><Tri c="#666" />
          </QuickItem>
          <QuickItem $w={33}>
            <svg width="14" height="15" viewBox="0 0 14 15"><path d="M0 0H11L14 3V15H0Z" fill="#666" /><rect x="3" y="0" width="7" height="5" fill="#c9c9c9" /><rect x="3" y="9" width="8" height="6" fill="#c9c9c9" /></svg>
          </QuickItem>
          <QuickItem $w={38}>
            <svg width="15" height="13" viewBox="0 0 15 13" fill="none"><path d="M5 1L1 5L5 9" stroke="#666" strokeWidth="2" /><path d="M2 5H9C12 5 13 8 12 12" stroke="#666" strokeWidth="2" /></svg>
            <QuickGap $w={5} /><Tri c="#666" />
          </QuickItem>
          <QuickItem $w={30}>
            <svg width="15" height="13" viewBox="0 0 15 13" fill="none"><path d="M10 1L14 5L10 9" stroke="#999" strokeWidth="2" /><path d="M13 5H6C3 5 2 8 3 12" stroke="#999" strokeWidth="2" /></svg>
            <QuickGap $w={4} /><Tri c="#999" />
          </QuickItem>
        </QuickBar>
        <HomeTab>
          <svg width="15" height="14" viewBox="0 0 15 14"><path d="M7.5 0L15 7H13V14H9V9H6V14H2V7H0Z" fill="#777" /></svg>
        </HomeTab>
        <DocTab>
          <CubeIcon />
          <DocTitle>Unbenannt*</DocTitle>
          <DocClose><svg width="10" height="10"><path d="M1 1L9 9M9 1L1 9" stroke="#777" strokeWidth="1.2" /></svg></DocClose>
        </DocTab>
        <PlusTab><svg width="14" height="14"><path d="M7 0V14M0 7H14" stroke="#8a8a8a" strokeWidth="3" /></svg></PlusTab>
        <TabIcons>
          <TabIcon><svg width="16" height="16" viewBox="0 0 16 16"><circle cx="8" cy="8" r="7" fill="#666" /><path d="M8 3A5 5 0 0 0 5 12L10 7L11 3Z" fill="#c9c9c9" /></svg></TabIcon>
          <TabIcon><svg width="16" height="16" viewBox="0 0 16 16" fill="none"><circle cx="8" cy="8" r="7.2" stroke="#666" strokeWidth="1.4" /><circle cx="8" cy="8" r="5" fill="#666" /><path d="M8 4.5V8.5H11" stroke="#e8e8e8" /></svg></TabIcon>
          <TabIcon><svg width="14" height="16" viewBox="0 0 14 16"><path d="M7 0C3 1 3 4 3 7C3 10 2 11 0 13H14C12 11 11 10 11 7C11 4 11 1 7 0Z" fill="#666" /><circle cx="7" cy="14.5" r="1.5" fill="#666" /></svg></TabIcon>
          <TabIcon><svg width="16" height="16" viewBox="0 0 16 16"><circle cx="8" cy="8" r="8" fill="#666" /><path d="M5.5 6C5.5 3.5 10.5 3.5 10.5 6C10.5 8 8 7.5 8 10" stroke="#ddd" strokeWidth="2" fill="none" /><rect x="7" y="11" width="2" height="2" fill="#ddd" /></svg></TabIcon>
          <TabIcon $w={47}>
            <svg width="24" height="28" viewBox="0 0 24 28"><ellipse cx="12" cy="14" rx="12" ry="14" fill="#1f2e4a" /><path d="M3 14C8 6 18 7 22 11C22 5 17 0 12 0C8 0 4 3 3 8Z" fill="#c8b474" /><path d="M3 20H21L18 25L8 26Z" fill="#46557a" /><circle cx="15" cy="8" r="3" fill="#f2c14a" /><path d="M11 12L16 11L18 17L11 18Z" fill="#8a5a3a" /></svg>
          </TabIcon>
        </TabIcons>
      </TabBar>

      <Ribbon>
        <ModeBox>KONSTRUKTION <Caret /></ModeBox>
        <ToolArea>
          <RibbonTabs>
            {ribbonTabs.map(([t, w]) => <RibbonTab key={t} $w={w}>{t}</RibbonTab>)}
            <RibbonTab $w={62} $active $ml={10}>SKIZZE</RibbonTab>
          </RibbonTabs>
          <Groups>
            <Group $w={178} $sep>
              <Tools>
                <Tool>{Icons.line}</Tool><Tool>{Icons.rect}</Tool><Tool>{Icons.spline}</Tool><Tool>{Icons.mirror}</Tool>
              </Tools>
              <GroupLabel $cx={85}>ERSTELLEN <Caret /></GroupLabel>
            </Group>
            <Group $w={183} $sep $pl={5}>
              <Tools>
                <Tool>{Icons.fillet}</Tool><Tool>{Icons.scissors}</Tool><Tool>{Icons.offset}</Tool><Tool>{Icons.sline}</Tool>
              </Tools>
              <GroupLabel $cx={90}>ÄNDERN <Caret /></GroupLabel>
            </Group>
            <Group $w={527} $sep $pl={5.5}>
              <Tools>
                <Tool $w={43}>{Icons.coincide}</Tool><Tool $w={42.5}>{Icons.perp}</Tool><Tool $w={43.5}>{Icons.tangent}</Tool><Tool $w={43.5}>{Icons.equal}</Tool>
                <Tool $w={43}>{Icons.parallel}</Tool><Tool $w={43}>{Icons.perp2}</Tool><Tool $w={43}>{Icons.lock}</Tool><Tool $w={43.5}>{Icons.triangle}</Tool>
                <Tool $w={43}>{Icons.concentric}</Tool><Tool $w={43}>{Icons.midpoint}</Tool><Tool $w={42.5}>{Icons.symmetry}</Tool><Tool $w={43}>{Icons.curvature}</Tool>
              </Tools>
              <GroupLabel $cx={262}>ABHÄNGIGKEITEN <Caret /></GroupLabel>
            </Group>
            <Group $w={114} $sep $pl={12}>
              <Tools>
                <Tool $w={44}>{Icons.paramCube}</Tool><Tool $w={44}>{Icons.paramTable}</Tool>
              </Tools>
              <GroupLabel $cx={58}>KONFIGURIEREN <Caret /></GroupLabel>
            </Group>
            <Group $w={73} $sep $pl={14}>
              <Tools><Tool $w={44}>{Icons.measure}</Tool></Tools>
              <GroupLabel $cx={37}>PRÜFEN <Caret /></GroupLabel>
            </Group>
            <Group $w={98} $sep $pl={9}>
              <Tools>
                <Tool $w={43}>{Icons.bolt}</Tool><Tool $w={43}>{Icons.image}</Tool>
              </Tools>
              <GroupLabel $cx={48}>EINFÜGEN <Caret /></GroupLabel>
            </Group>
            <Group $w={107} $pl={31}>
              <Tools><Tool $w={44}>{Icons.select}</Tool></Tools>
              <GroupLabel $cx={51}>AUSWÄHLEN <Caret /></GroupLabel>
            </Group>
            <Group $w={153} $hl $pl={54}>
              <Tools><Tool $w={46}>{Icons.finish}</Tool></Tools>
              <GroupLabel $cx={77} $top={44}>SKIZZE FERTIG STELLEN <Caret /></GroupLabel>
            </Group>
          </Groups>
        </ToolArea>
      </Ribbon>

      <Canvas>
        <Sketch />

        <BrowserPanel>
          <PanelHead>
            <DoubleTri left />
            <HeadTitle $ml={2}>BROWSER</HeadTitle>
            <DotBtn />
          </PanelHead>
          <Tree>
            <TreeRow $pl={17}>
              <Expander $w={19}><svg width="12" height="12" viewBox="0 0 12 12"><path d="M0.5 11.5L11 1V11.5Z" fill="#888" stroke="#222" /></svg></Expander>
              <RowBox $w={200}>
                <Eye />
                <RootBar>
                  <svg width="16" height="15" viewBox="0 0 16 15"><path d="M1 3L4 0.5H15V12L12.5 14.5H1Z" fill="#f4f4f4" stroke="#555" strokeWidth=".7" /><path d="M12.5 3V14.5L15 12V0.5Z" fill="#ccc" /></svg>
                  <RootText>(Nicht gespeichert)</RootText>
                </RootBar>
                <svg width="13" height="13" viewBox="0 0 13 13" fill="none"><circle cx="6.5" cy="6.5" r="5.8" stroke="#333" /><circle cx="6.5" cy="6.5" r="2.2" fill="#333" /></svg>
              </RowBox>
            </TreeRow>
            <TreeRow $pl={36}>
              <Expander $w={18}><Exp /></Expander>
              <RowBox $w={150}><Gear /><RowLabel $ml={12}>Dokumenteinstellungen</RowLabel></RowBox>
            </TreeRow>
            <TreeRow $pl={36}>
              <Expander $w={18}><Exp /></Expander>
              <RowBox $w={142}><Folder /><RowLabel $ml={14}>Benannte Ansichten</RowLabel></RowBox>
            </TreeRow>
            <TreeRow $pl={36}>
              <Expander $w={18}><Exp /></Expander>
              <RowBox $w={115}><Eye off /><RowLabel $ml={9}><Folder /></RowLabel><RowLabel $ml={14}>Ursprung</RowLabel></RowBox>
            </TreeRow>
            <TreeRow $pl={36}>
              <Expander $w={18}><Exp /></Expander>
              <RowBox $w={107}><Eye /><RowLabel $ml={9}><Folder /></RowLabel><RowLabel $ml={14}>Skizzen</RowLabel></RowBox>
            </TreeRow>
          </Tree>
        </BrowserPanel>

        <Cube>
          <CubeText>OBEN</CubeText>
          <Axis $c="#7fe07f" $x={-1} $y={-15}>Y</Axis>
          <Axis $c="#f58a8a" $x={55} $y={41}>X</Axis>
          <Axis $c="#7f7ff5" $x={-8} $y={48}>Z</Axis>
        </Cube>

        <Palette>
          <PalHead>
            <DotBtn />
            <HeadTitle>SKIZZENPALETTE</HeadTitle>
            <DoubleTri />
          </PalHead>
          <PalSection><SecCaret /> Optionen</PalSection>
          <PalRow>
            Linientyp
            <PalCtrl>
              <svg width="16" height="16" viewBox="0 0 16 16" fill="none"><path d="M0 8H16" stroke="#e8883a" strokeDasharray="3 2" /><path d="M14 2L5 8L14 14" stroke="#999" /></svg>
              <svg width="16" height="14" viewBox="0 0 16 14" fill="none"><path d="M0 7H16" stroke="#e8b88a" strokeDasharray="3 2" /><path d="M4 1H12L15 3V11L12 13H4L1 11V3Z" stroke="#ccc" /></svg>
            </PalCtrl>
          </PalRow>
          <PalRow>
            Ausrichten nach
            <PalCtrl><ViewCapture /></PalCtrl>
          </PalRow>
          {palRows.map(([t, on]) => (
            <PalRow key={t}>
              {t}
              <PalCtrl>
                <Check $on={on}>
                  {on && <svg width="10" height="9" viewBox="0 0 10 9" fill="none"><path d="M1 5L3.5 8L9 1" stroke="#222" strokeWidth="1.3" /></svg>}
                </Check>
              </PalCtrl>
            </PalRow>
          ))}
          <PalFoot><PalBtn>Skizze fertig stellen</PalBtn></PalFoot>
        </Palette>

        <CommentBar>
          <HeadTitle $ml={20}>KOMMENTARE</HeadTitle>
          <DotBtn plus />
        </CommentBar>

        <NavBar>
          <NavItem $w={32}>
            <svg width="17" height="17" viewBox="0 0 17 17" fill="none"><path d="M8 1V16" stroke="#333" strokeWidth="1.5" /><ellipse cx="8.5" cy="8" rx="7.5" ry="3" stroke="#555" /><path d="M1 11H8" stroke="#222" strokeWidth="2" /></svg>
            <Tri c="#444" />
          </NavItem>
          <NavItem $w={25}><ViewCapture /></NavItem>
          <NavItem $w={25}><svg width="16" height="17" viewBox="0 0 16 17" fill="#f4f4f4" stroke="#333"><path d="M3 10L1 6C1 5 3 5 3.5 6L5 8V2.5C5 1 6.5 1 6.5 2.5V1.5C6.5 .5 8 .5 8.5 1.5V2C9 1 10.5 1 10.5 2.5V3C11 2 13 2.5 13 4V11C13 14 11 16 9 16H7C5 16 4 13 3 10Z" /></svg></NavItem>
          <NavItem $w={25}>
            <svg width="18" height="16" viewBox="0 0 18 16" fill="none"><circle cx="6" cy="8" r="4.8" stroke="#555" fill="#dfeaf4" /><path d="M10 12L14 15" stroke="#333" strokeWidth="2" /><path d="M11 2H17M14 0V4M11 6H17" stroke="#444" /></svg>
          </NavItem>
          <NavItem $w={38}>
            <svg width="16" height="16" viewBox="0 0 16 16" fill="none"><rect x=".5" y=".5" width="15" height="15" stroke="#666" strokeDasharray="2 1.5" /><circle cx="7" cy="7" r="5" stroke="#555" fill="#dfeaf4" /><path d="M11 11L15 15" stroke="#333" strokeWidth="2" /></svg>
            <Tri c="#444" />
          </NavItem>
          <NavItem $w={35}>
            <svg width="16" height="16" viewBox="0 0 16 16" fill="none"><rect x=".7" y=".7" width="14.6" height="11" fill="#7ca4d4" stroke="#444" /><path d="M5 15H11M8 12V15" stroke="#555" /></svg>
            <Tri c="#444" />
          </NavItem>
          <NavItem $w={29}>
            <svg width="16" height="16" viewBox="0 0 16 16" fill="#a8a8a8" stroke="#666" strokeWidth=".6"><rect x=".3" y=".3" width="15.4" height="15.4" /><path d="M3 0V16M6 0V16M9 0V16M12 0V16M0 3H16M0 6H16M0 9H16M0 12H16" /></svg>
            <Tri c="#444" />
          </NavItem>
          <NavItem $w={27}>
            <svg width="15" height="13" viewBox="0 0 15 13" fill="#b8cfe8" stroke="#3a5a8a" strokeWidth="1.2"><rect x=".6" y=".6" width="6.4" height="5.4" /><rect x="8" y=".6" width="6.4" height="5.4" /><rect x=".6" y="7" width="6.4" height="5.4" /><rect x="8" y="7" width="6.4" height="5.4" /></svg>
            <Tri c="#444" />
          </NavItem>
        </NavBar>

        <Corner><svg width="9" height="8" viewBox="0 0 9 8" fill="none"><path d="M1 1H8V5H4L2 7V5H1Z" stroke="#f0f0f0" /></svg></Corner>
      </Canvas>

      <Timeline>
        <PlayBtn $w={25}><svg width="12" height="12"><path d="M0 0H2V12H0ZM12 0V12L3 6Z" fill="#555" /></svg></PlayBtn>
        <PlayBtn $w={24}><svg width="13" height="12"><path d="M9 0V12L0 6ZM10 4H13V8H10Z" fill="#555" /></svg></PlayBtn>
        <PlayBtn $w={26}><svg width="13" height="14"><path d="M0 0L13 7L0 14Z" fill="#555" /></svg></PlayBtn>
        <PlayBtn $w={25}><svg width="13" height="12"><path d="M4 0V12L13 6ZM0 4H3V8H0Z" fill="#555" /></svg></PlayBtn>
        <PlayBtn $w={6}><svg width="12" height="12"><path d="M0 0L9 6L0 12ZM10 0H12V12H10Z" fill="#555" /></svg></PlayBtn>
        <TimeItem>
          <svg width="16" height="16" viewBox="0 0 16 16" fill="none"><rect x="1" y="1" width="12" height="12" stroke="#4a9ac8" /><circle cx="7" cy="7" r="3" stroke="#4a9ac8" /><path d="M9 13L14 8" stroke="#f2b93a" strokeWidth="2.4" /><rect x="12" y="6.5" width="3" height="2.5" fill="#e84030" /></svg>
        </TimeItem>
        <TimeStub />
        <Marker width="12" height="32" viewBox="0 0 12 32"><path d="M0 0H12L7 8V32H5V8Z" fill="#5c5c5c" /></Marker>
        <SettingGear><Gear s={14} c="#555" /></SettingGear>
      </Timeline>
    </Page>
  );
}
